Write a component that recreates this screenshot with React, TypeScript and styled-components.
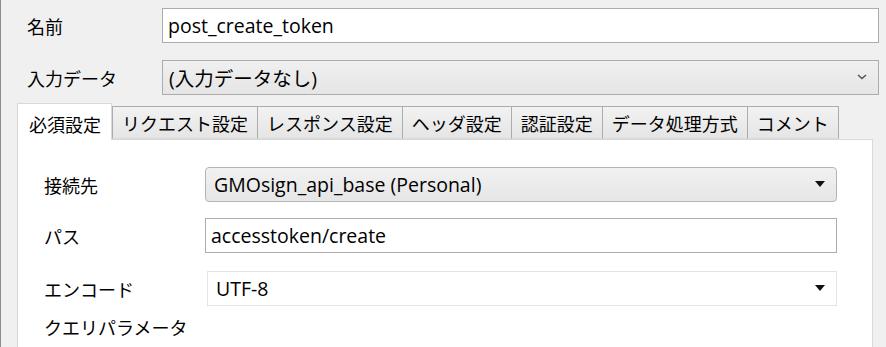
import styled, { createGlobalStyle } from 'styled-components';

const GlobalStyle = createGlobalStyle`
    html, body {
        margin: 0;
        padding: 0;
        background: #f0f0f0;
    }
    body {
        font-family: "Open Sans", "Noto Sans CJK JP", sans-serif;
        font-size: 18px;
        color: #000;
    }
`;

const Window = styled.div`
    width: 886px;
    height: 347px;
    overflow: hidden;
    box-sizing: border-box;
    border-left: 1px solid #8c8c8c;
    padding: 8px 7px 0 16px;
    display: flex;
    flex-direction: column;
`;

interface RowProps {
    $labelWidth: number;
    $gap?: number;
}

const Row = styled.div<RowProps>`
    display: grid;
    grid-template-columns: ${({ $labelWidth }) => $labelWidth}px 1fr;
    align-items: center;
    margin-bottom: ${({ $gap }) => $gap ?? 17}px;
`;

const Label = styled.div`
    padding-left: 10px;
    white-space: nowrap;
`;

const TextBox = styled.div`
    height: 35px;
    box-sizing: border-box;
    border: 1px solid #acacac;
    background: #fff;
    display: flex;
    align-items: center;
    padding: 0 0 1px 5px;
    font-size: 19.5px;
`;

const ComboBox = styled.div`
    height: 35px;
    box-sizing: border-box;
    border: 1px solid #acacac;
    background: linear-gradient(#f0f0f0, #e5e5e5);
    display: flex;
    align-items: center;
    justify-content: space-between;
    padding: 0 10px 1px 6px;
    font-size: 19.5px;
`;

interface DropProps {
    $flat?: boolean;
}

const DropDown = styled.div<DropProps>`
    height: 35px;
    box-sizing: border-box;
    border: 1px solid ${({ $flat }) => ($flat ? '#e3e3e3' : '#b4b4b4')};
    border-radius: ${({ $flat }) => ($flat ? 0 : 4)}px;
    background: ${({ $flat }) => ($flat ? '#fff' : 'linear-gradient(#f1f1f1, #e6e6e6)')};
    display: flex;
    align-items: center;
    justify-content: space-between;
    padding: 0 11px 1px 8px;
    font-size: 19.5px;
`;

const Triangle = styled.span`
    width: 0;
    height: 0;
    border-left: 5px solid transparent;
    border-right: 5px solid transparent;
    border-top: 6px solid #111;
`;

const TabStrip = styled.div`
    display: flex;
    align-items: flex-end;
    height: 36px;
`;

interface TabProps {
    $active?: boolean;
}

const Tab = styled.div<TabProps>`
    box-sizing: border-box;
    height: ${({ $active }) => ($active ? 37 : 33)}px;
    margin-bottom: ${({ $active }) => ($active ? -1 : 0)}px;
    padding: ${({ $active }) => ($active ? '3px 10px 0 11px' : '0 9px 0 9px')};
    display: flex;
    align-items: center;
    white-space: nowrap;
    background: ${({ $active }) => ($active ? '#fff' : 'linear-gradient(#f2f2f2, #e5e5e5)')};
    border: 1px solid ${({ $active }) => ($active ? '#d9d9d9' : '#acacac')};
    border-bottom: ${({ $active }) => ($active ? 'none' : '1px solid #d9d9d9')};
    margin-left: ${({ $active }) => ($active ? 0 : -1)}px;
    position: relative;
    z-index: ${({ $active }) => ($active ? 1 : 0)};
    &:nth-child(2) {
        margin-left: 0;
    }
`;

const Panel = styled.div`
    flex: 1;
    width: 856px;
    box-sizing: border-box;
    background: #fff;
    border: 1px solid #d9d9d9;
    border-bottom: none;
    padding: 27px 35px 0 16px;
`;

const tabs = ['必須設定', 'リクエスト設定', 'レスポンス設定', 'ヘッダ設定', '認証設定', 'データ処理方式', 'コメント'];

const Chevron = () => (
    <svg width='12' height='8' viewBox='0 0 12 8'>
        <path d='M2 2 L6 5.5 L10 2' fill='none' stroke='#555' strokeWidth='1.6' />
    </svg>
);

export default function App() {
    return (
        <>
            <GlobalStyle />
            <Window>
                <Row $labelWidth={145}>
                    <Label>名前</Label>
                    <TextBox>post_create_token</TextBox>
                </Row>
                <Row $labelWidth={145} $gap={8}>
                    <Label>入力データ</Label>
                    <ComboBox>
                        (入力データなし)
                        <Chevron />
                    </ComboBox>
                </Row>
                <TabStrip>
                    {tabs.map((t, i) => (
                        <Tab key={t} $active={i === 0}>
                            {t}
                        </Tab>
                    ))}
                </TabStrip>
                <Panel>
                    <Row $labelWidth={171} $gap={16}>
                        <Label>接続先</Label>
                        <DropDown>
                            GMOsign_api_base (Personal)
                            <Triangle />
                        </DropDown>
                    </Row>
                    <Row $labelWidth={171} $gap={18}>
                        <Label>パス</Label>
                        <TextBox>accesstoken/create</TextBox>
                    </Row>
                    <Row $labelWidth={173} $gap={8}>
                        <Label>エンコード</Label>
                        <DropDown $flat>
                            UTF-8
                            <Triangle />
                        </DropDown>
                    </Row>
                    <Label>クエリパラメータ</Label>
                </Panel>
            </Window>
        </>
    );
}
